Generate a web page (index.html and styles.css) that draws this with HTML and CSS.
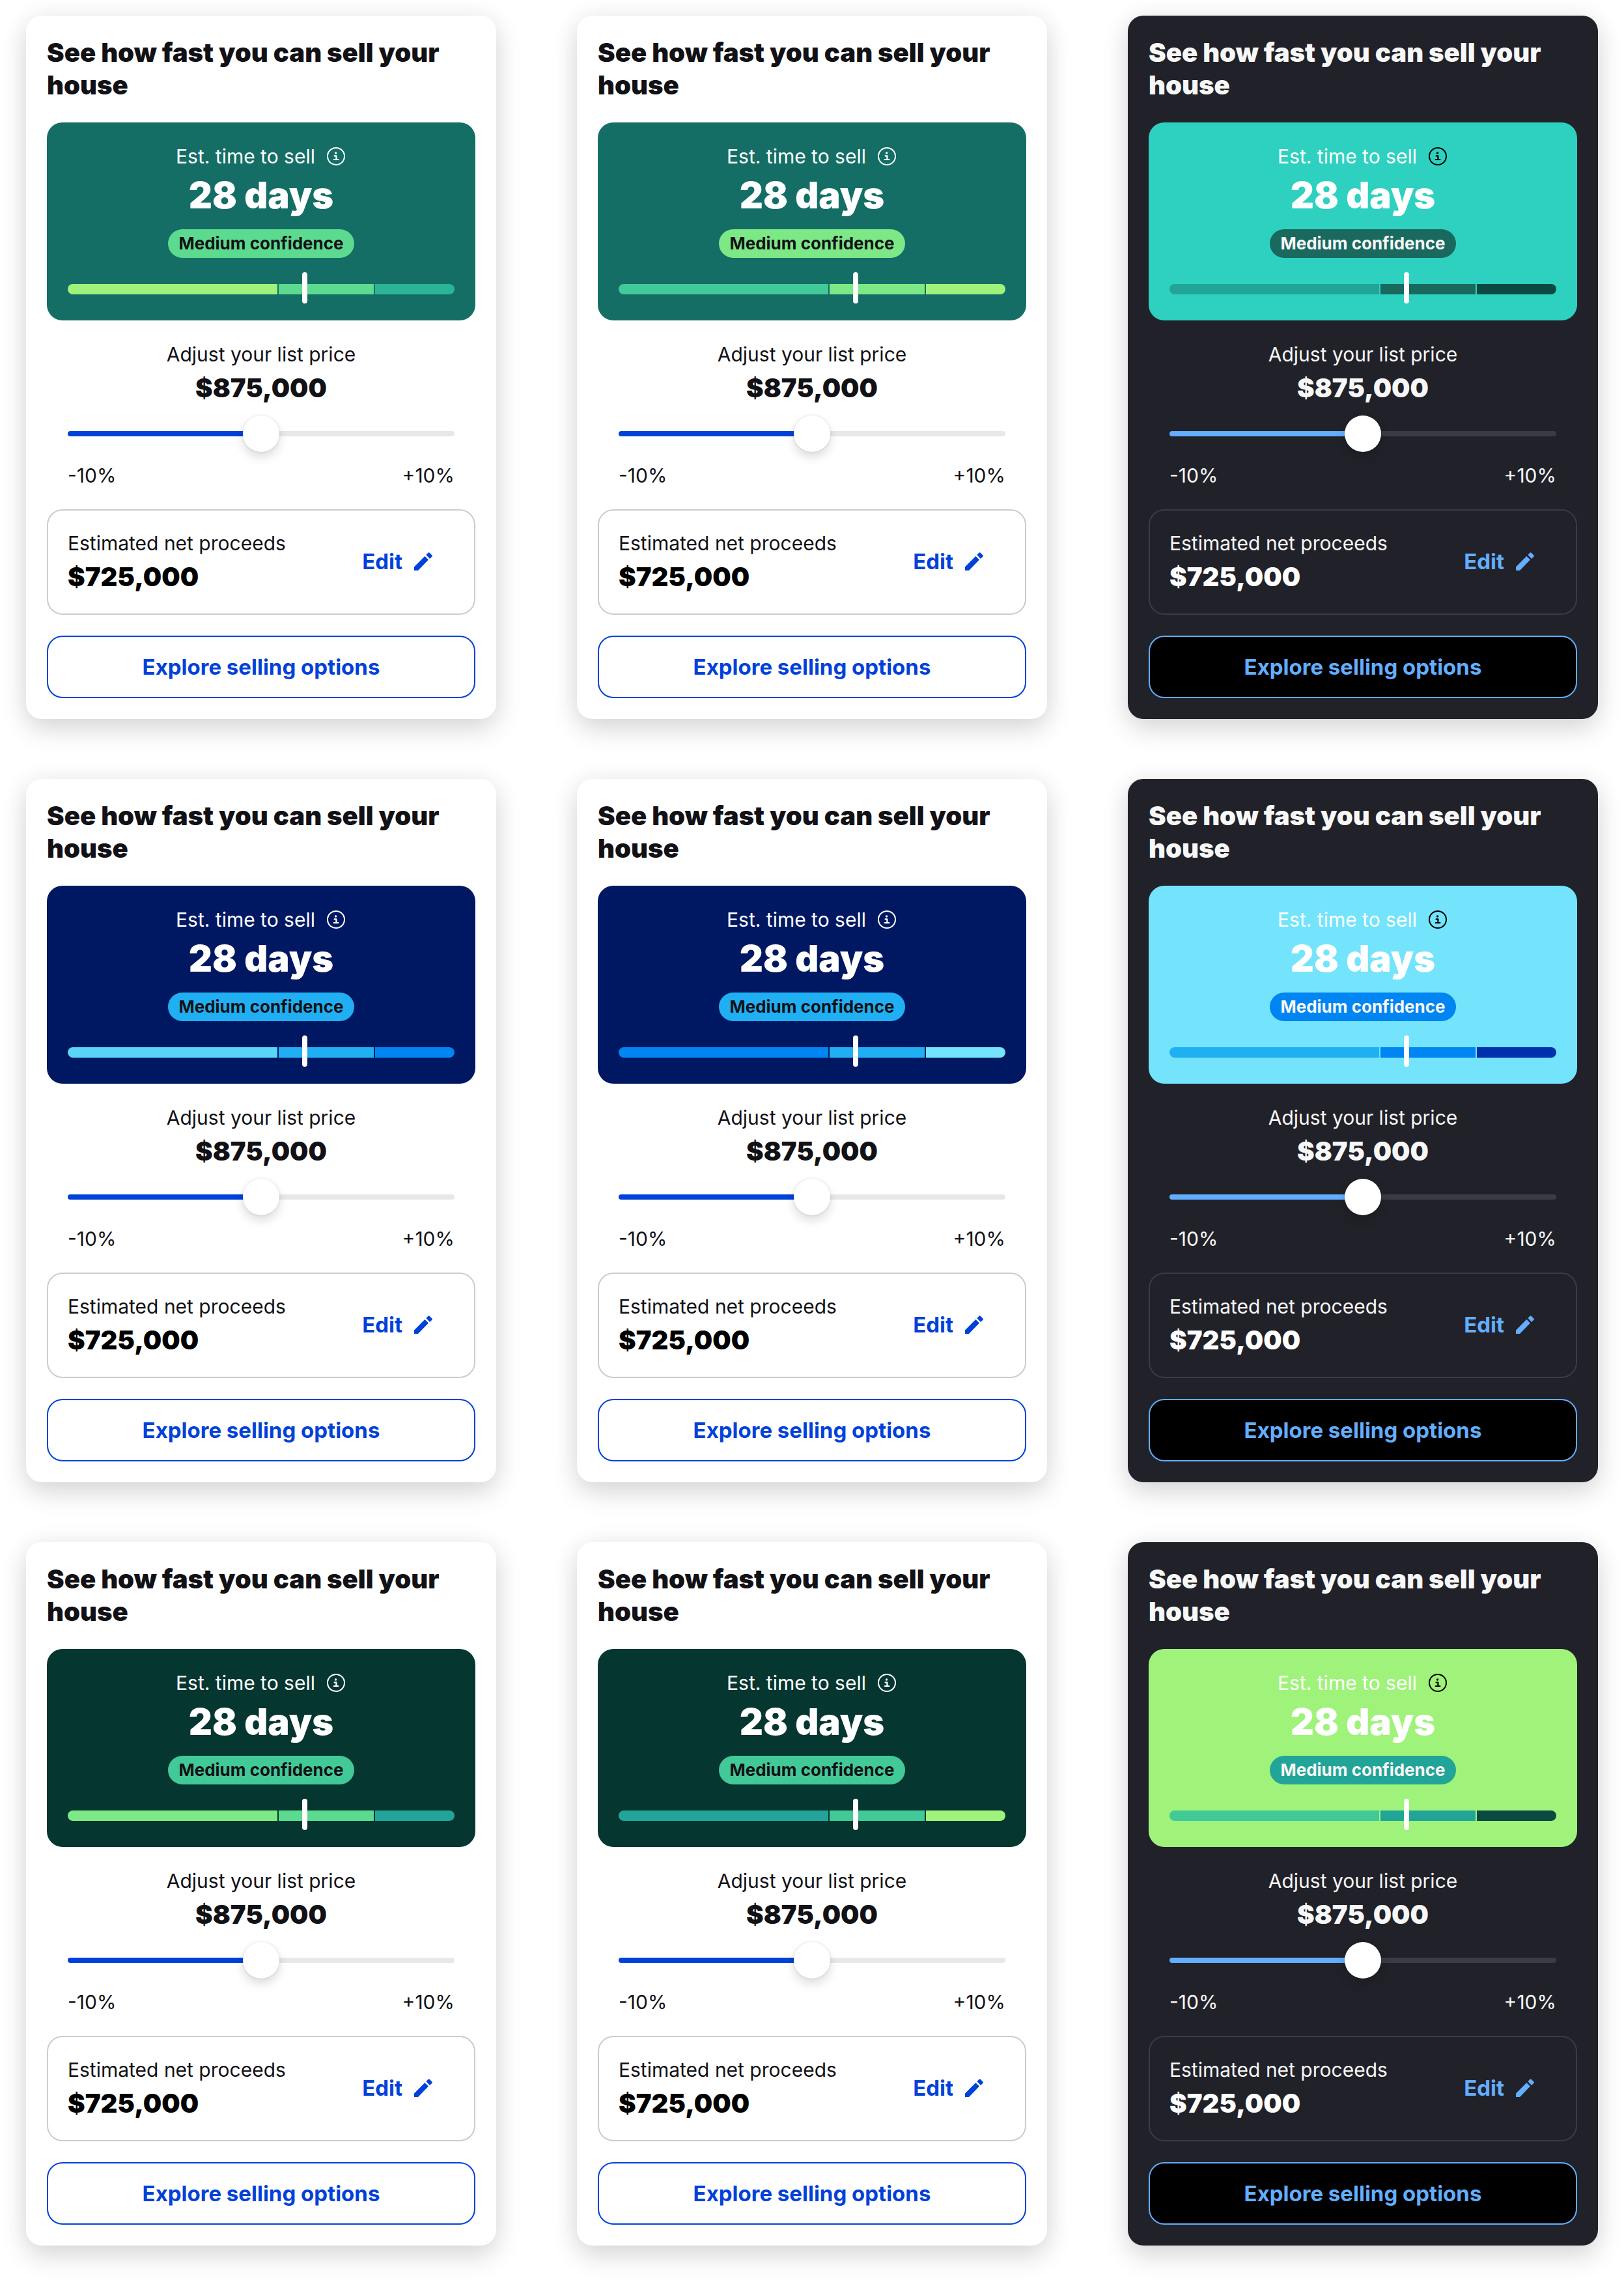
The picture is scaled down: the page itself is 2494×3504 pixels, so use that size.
FILE: index.html
```
<!DOCTYPE html>
<html lang="en">
<head>
  <meta charset="UTF-8">
  <meta name="viewport" content="width=device-width, initial-scale=1.0">
  <title>Time to sell</title>
  <link rel="stylesheet" href="styles.css">
</head>
<body>

  <main id="cards" class="cards"></main>

  <template id="card-template">
    <section class="card">
      <h2 class="card-title">See how fast you can sell your house</h2>

      <div class="estimate">
        <div class="estimate-label">
          <span>Est. time to sell</span>
          <button type="button" class="info" aria-label="About this estimate">
            <svg viewBox="0 0 32 32" aria-hidden="true">
              <circle cx="16" cy="16" r="13" fill="none" stroke="currentColor" stroke-width="2"/>
              <circle cx="15.6" cy="11" r="1.7" fill="currentColor"/>
              <path d="M13.6 15.4h2.8v5.4M12.8 21h6.6" fill="none" stroke="currentColor" stroke-width="2.2" stroke-linecap="round" stroke-linejoin="round"/>
            </svg>
          </button>
        </div>
        <p class="days">28 days</p>
        <span class="badge">Medium confidence</span>
        <div class="meter">
          <span class="seg-low"></span>
          <span class="seg-mid"></span>
          <span class="seg-high"></span>
          <span class="marker"></span>
        </div>
      </div>

      <div class="price">
        <label>Adjust your list price</label>
        <output class="value">$875,000</output>
        <input type="range" class="slider" min="-10" max="10" value="0">
        <div class="limits">
          <span>-10%</span>
          <span>+10%</span>
        </div>
      </div>

      <div class="proceeds">
        <div>
          <p>Estimated net proceeds</p>
          <p class="value">$725,000</p>
        </div>
        <button type="button" class="edit">
          Edit
          <svg viewBox="0 0 32 32" aria-hidden="true">
            <path fill="currentColor" d="M2 24.4 18.4 8l5.600 5.600L8 30H2zM20.400 6l3.200-3.300q1-1 2 0L29.600 6.700q.8.9 0 1.800L26 12z"/>
          </svg>
        </button>
      </div>

      <button type="button" class="explore">Explore selling options</button>
    </section>
  </template>

<script>
  var oCards = document.getElementById('cards');
  var oTemplate = document.getElementById('card-template');
  var themes = [
    'teal-a', 'teal-b', 'teal-dark dark',
    'blue-a', 'blue-b', 'blue-dark dark',
    'green-a', 'green-b', 'green-dark dark'
  ];

  for (var i = 0; i < themes.length; i++) {
    var oCard = oTemplate.content.cloneNode(true).querySelector('.card');
    oCard.className += ' ' + themes[i];
    oCard.querySelector('.slider').id = 'price-' + i;
    oCard.querySelector('label').htmlFor = 'price-' + i;
    oCards.appendChild(oCard);
  }
</script>
</body>
</html>
```
FILE: styles.css
```
* {
  box-sizing: border-box;
  margin: 0;
  padding: 0;
}

body {
  background: #fff;
  font-family: Inter, "Liberation Sans", sans-serif;
  font-size: 30px;
  line-height: 40px;
}

button {
  border: 0;
  background: none;
  font: inherit;
  cursor: pointer;
}

.cards {
  display: grid;
  grid-template-columns: repeat(3, 1fr);
  gap: 92px 124px;
  padding: 24px 40px 56px;
}

.card {
  --surface: #fff;
  --text: #111116;
  --strong: #000;
  --action: #0041d9;
  --track: #e8e8ea;
  --border: #cccbd3;
  --button: #fff;
  --info: #fff;
  display: flex;
  flex-direction: column;
  gap: 32px;
  padding: 32px;
  border-radius: 24px;
  background: var(--surface);
  color: var(--text);
  box-shadow: 0 0 40px rgba(0, 0, 0, .05), 0 16px 40px rgba(0, 0, 0, .14);
}

.dark {
  --surface: #212129;
  --text: #f7f7f7;
  --strong: #fff;
  --action: #62aeff;
  --track: #3b3b45;
  --border: #3b3b45;
  --button: #000;
  --info: #000;
}

.card-title {
  font-size: 40px;
  font-weight: 900;
  line-height: 50px;
}

/* estimate panel */
.estimate {
  display: flex;
  flex-direction: column;
  align-items: center;
  padding: 32px 32px 40px;
  border-radius: 24px;
  background: var(--panel);
  color: #fff;
}

.estimate-label {
  display: flex;
  align-items: center;
  gap: 16px;
}

.info {
  color: var(--info);
}

.info svg, .edit svg {
  display: block;
  width: 32px;
  height: 32px;
}

.days {
  font-size: 56px;
  font-weight: 900;
  line-height: 80px;
}

.badge {
  margin-top: 12px;
  padding: 0 16px;
  border-radius: 22px;
  background: var(--badge, var(--mid));
  color: var(--text);
  font-size: 26px;
  font-weight: 700;
  line-height: 44px;
}

.meter {
  position: relative;
  display: flex;
  gap: 2px;
  width: 100%;
  height: 16px;
  margin-top: 40px;
}

.seg-low {
  flex: 322;
  border-radius: 8px 0 0 8px;
  background: var(--low);
}

.seg-mid {
  flex: 146;
  background: var(--mid);
}

.seg-high {
  flex: 122;
  border-radius: 0 8px 8px 0;
  background: var(--high);
}

.marker {
  position: absolute;
  top: -18px;
  left: 60.6%;
  width: 8px;
  height: 48px;
  border-radius: 4px;
  background: #fff;
}

/* list price */
.price {
  display: flex;
  flex-direction: column;
  align-items: center;
  padding: 0 32px;
}

.value {
  margin-top: 8px;
  font-size: 40px;
  font-weight: 900;
  line-height: 48px;
}

.slider {
  appearance: none;
  width: 100%;
  height: 56px;
  margin-top: 18px;
  background: none;
  cursor: pointer;
}

.slider::-webkit-slider-runnable-track {
  height: 8px;
  border-radius: 4px;
  background: linear-gradient(to right, var(--action) 50%, var(--track) 50%);
}

.slider::-webkit-slider-thumb {
  appearance: none;
  width: 56px;
  height: 56px;
  margin-top: -24px;
  border-radius: 50%;
  background: #fff;
  box-shadow: 0 0 4px rgba(0, 0, 0, .1), 0 8px 16px rgba(0, 0, 0, .14);
}

.limits {
  display: flex;
  justify-content: space-between;
  width: 100%;
  margin-top: 16px;
}

/* net proceeds */
.proceeds {
  display: flex;
  align-items: center;
  justify-content: space-between;
  padding: 30px 30px 32px;
  border: 2px solid var(--border);
  border-radius: 24px;
}

.proceeds .value {
  color: var(--strong);
}

.edit {
  display: flex;
  align-items: center;
  gap: 16px;
  padding: 0 32px;
  color: var(--action);
  font-size: 33px;
  font-weight: 700;
}

.explore {
  height: 96px;
  border: 2px solid var(--action);
  border-radius: 24px;
  background: var(--button);
  color: var(--action);
  font-size: 33px;
  font-weight: 700;
}

/* colour themes */
.teal-a {
  --panel: #146e65;
  --low: #9ff37a;
  --mid: #5cda90;
  --high: #2cb496;
}

.teal-b {
  --panel: #146e65;
  --low: #42c998;
  --mid: #7de886;
  --high: #9ff37a;
}

.teal-dark {
  --panel: #2ed1bf;
  --low: #22a598;
  --mid: #19695f;
  --high: #0b4a42;
}

.blue-a {
  --panel: #001861;
  --low: #59d5f8;
  --mid: #21aff3;
  --high: #0085f2;
}

.blue-b {
  --panel: #001861;
  --low: #0085f2;
  --mid: #21aff3;
  --high: #73e4fb;
}

.blue-dark {
  --panel: #73e4fb;
  --low: #21aff3;
  --mid: #0085f2;
  --high: #0030ac;
}

.green-a {
  --panel: #063630;
  --badge: #42c998;
  --low: #7de886;
  --mid: #5cda90;
  --high: #22a598;
}

.green-b {
  --panel: #063630;
  --low: #22a598;
  --mid: #42c998;
  --high: #9ff37a;
}

.green-dark {
  --panel: #9ff37a;
  --low: #42c998;
  --mid: #22a598;
  --high: #0b4a42;
}
```
